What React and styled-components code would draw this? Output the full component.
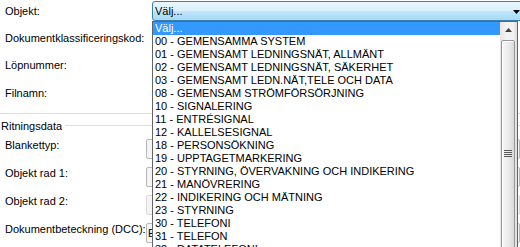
import React from "react";
import styled, { createGlobalStyle } from "styled-components";

const Global = createGlobalStyle`
  html, body { margin: 0; padding: 0; background: #ffffff; }
  body { font-family: "Liberation Sans", Arial, sans-serif; font-size: 11px; color: #000; }
`;

const Window = styled.div`
  position: relative;
  width: 520px;
  height: 247px;
  overflow: hidden;
  background: #ffffff;
`;

const Form = styled.div`
  display: flex;
  flex-direction: column;
`;

const FieldRow = styled.div`
  display: grid;
  grid-template-columns: ${(p) => p.$labelWidth}px 1fr;
  align-items: center;
  height: ${(p) => p.$h}px;
  padding-left: 5px;
`;

const Label = styled.span`
  line-height: 13px;
  white-space: nowrap;
`;

const Combo = styled.div`
  height: 18px;
  width: 365px;
  border: 1px solid #3c7fb1;
  border-radius: 3px;
  background: linear-gradient(#eaf6fd 0%, #d9f0fc 48%, #bee6fd 52%, #a7d9f5 100%);
  display: flex;
  align-items: center;
  justify-content: space-between;
  padding: 0 8px 0 2px;
  box-sizing: content-box;
`;

const ComboText = styled.span`
  line-height: 13px;
`;

const Arrow = styled.svg`
  width: 7px;
  height: 4px;
  margin-top: 1px;
`;

const Divider = styled.div`
  height: 1px;
  margin-top: 3px;
  background: #d5dfe5;
`;

const GroupBox = styled.div`
  display: flex;
  flex-direction: column;
`;

const Legend = styled.div`
  height: 24px;
  display: flex;
  align-items: center;
  padding-left: 1px;
`;

const LegendText = styled.span`
  line-height: 13px;
`;

const LegendLine = styled.div`
  flex: 1;
  height: 1px;
  margin-left: 3px;
  margin-top: -1px;
  background: #d5dfe5;
`;

const BoxRow = styled.div`
  display: grid;
  grid-template-columns: 141px 1fr;
  align-items: start;
  height: 28px;
  padding-left: 5px;
`;

const BoxLabel = styled.span`
  line-height: 13px;
  margin-top: 1px;
  white-space: nowrap;
`;

const TextBox = styled.div`
  height: 18px;
  margin-top: 1px;
  border: 1px solid ${(p) => (p.$light ? "#dadada" : "#b8b8b8")};
  border-radius: 2px;
  background: #f4f4f4;
  padding-left: 1px;
  line-height: 18px;
  white-space: nowrap;
  overflow: hidden;
`;

const DropList = styled.div`
  position: absolute;
  left: 152px;
  top: 21px;
  width: 364px;
  height: 240px;
  border: 1px solid #646464;
  background: #ffffff;
  display: flex;
`;

const Items = styled.div`
  flex: 1;
  display: flex;
  flex-direction: column;
`;

const Item = styled.div`
  height: 13px;
  line-height: 13px;
  padding-left: 2px;
  white-space: nowrap;
  background: ${(p) => (p.$selected ? "#3399ff" : "transparent")};
  color: ${(p) => (p.$selected ? "#ffffff" : "#000000")};
`;

const ScrollBar = styled.div`
  width: 17px;
  display: flex;
  flex-direction: column;
  background: linear-gradient(90deg, #e6e6e6, #f4f4f4 40%, #f0f0f0 80%, #dcdcdc);
`;

const ScrollButton = styled.div`
  height: 17px;
  display: flex;
  align-items: center;
  justify-content: center;
`;

const Thumb = styled.div`
  margin: 2px 2px 0 1px;
  height: 228px;
  border: 1px solid #969696;
  border-radius: 2px;
  background: linear-gradient(90deg, #f7f7f7, #ececec 50%, #d9d9d9);
  box-shadow: inset 1px 1px 0 #ffffff;
  display: flex;
  align-items: flex-start;
  justify-content: center;
  padding-top: 109px;
  box-sizing: border-box;
`;

const Grip = styled.svg`
  width: 8px;
  height: 8px;
`;

const items = [
  "Välj...",
  "00 - GEMENSAMMA SYSTEM",
  "01 - GEMENSAMT LEDNINGSNÄT, ALLMÄNT",
  "02 - GEMENSAMT LEDNINGSNÄT, SÄKERHET",
  "03 - GEMENSAMT LEDN.NÄT,TELE OCH DATA",
  "08 - GEMENSAM STRÖMFÖRSÖRJNING",
  "10 - SIGNALERING",
  "11 - ENTRÉSIGNAL",
  "12 - KALLELSESIGNAL",
  "18 - PERSONSÖKNING",
  "19 - UPPTAGETMARKERING",
  "20 - STYRNING, ÖVERVAKNING OCH INDIKERING",
  "21 - MANÖVRERING",
  "22 - INDIKERING OCH MÄTNING",
  "23 - STYRNING",
  "30 - TELEFONI",
  "31 - TELEFON",
  "32 - DATATELEFONI",
];

export default function App() {
  return (
    <>
      <Global />
      <Window>
        <Form>
          <FieldRow $h={22} $labelWidth={147}>
            <Label>Objekt:</Label>
            <Combo>
              <ComboText>Välj...</ComboText>
              <Arrow viewBox="0 0 7 4">
                <path d="M0 0h7L3.5 4z" fill="#000" />
              </Arrow>
            </Combo>
          </FieldRow>
          <FieldRow $h={32} $labelWidth={147}>
            <Label>Dokumentklassificeringskod:</Label>
          </FieldRow>
          <FieldRow $h={22} $labelWidth={147}>
            <Label>Löpnummer:</Label>
          </FieldRow>
          <FieldRow $h={34} $labelWidth={147}>
            <Label>Filnamn:</Label>
          </FieldRow>
          <Divider />
          <GroupBox>
            <Legend>
              <LegendText>Ritningsdata</LegendText>
              <LegendLine />
            </Legend>
            <BoxRow>
              <BoxLabel>Blankettyp:</BoxLabel>
              <TextBox />
            </BoxRow>
            <BoxRow>
              <BoxLabel>Objekt rad 1:</BoxLabel>
              <TextBox />
            </BoxRow>
            <BoxRow>
              <BoxLabel>Objekt rad 2:</BoxLabel>
              <TextBox $light />
            </BoxRow>
            <BoxRow>
              <BoxLabel>Dokumentbeteckning (DCC):</BoxLabel>
              <TextBox>E</TextBox>
            </BoxRow>
          </GroupBox>
        </Form>
        <DropList>
          <Items>
            {items.map((t, i) => (
              <Item key={t} $selected={i === 0}>
                {t}
              </Item>
            ))}
          </Items>
          <ScrollBar>
            <ScrollButton>
              <svg width="7" height="4" viewBox="0 0 7 4">
                <path d="M3.5 0L7 4H0z" fill="#404040" />
              </svg>
            </ScrollButton>
            <Thumb>
              <Grip viewBox="0 0 8 8">
                <path d="M0 0.5h8M0 2.5h8M0 4.5h8M0 6.5h8" stroke="#5a5a5a" strokeWidth="1" />
              </Grip>
            </Thumb>
          </ScrollBar>
        </DropList>
      </Window>
    </>
  );
}
